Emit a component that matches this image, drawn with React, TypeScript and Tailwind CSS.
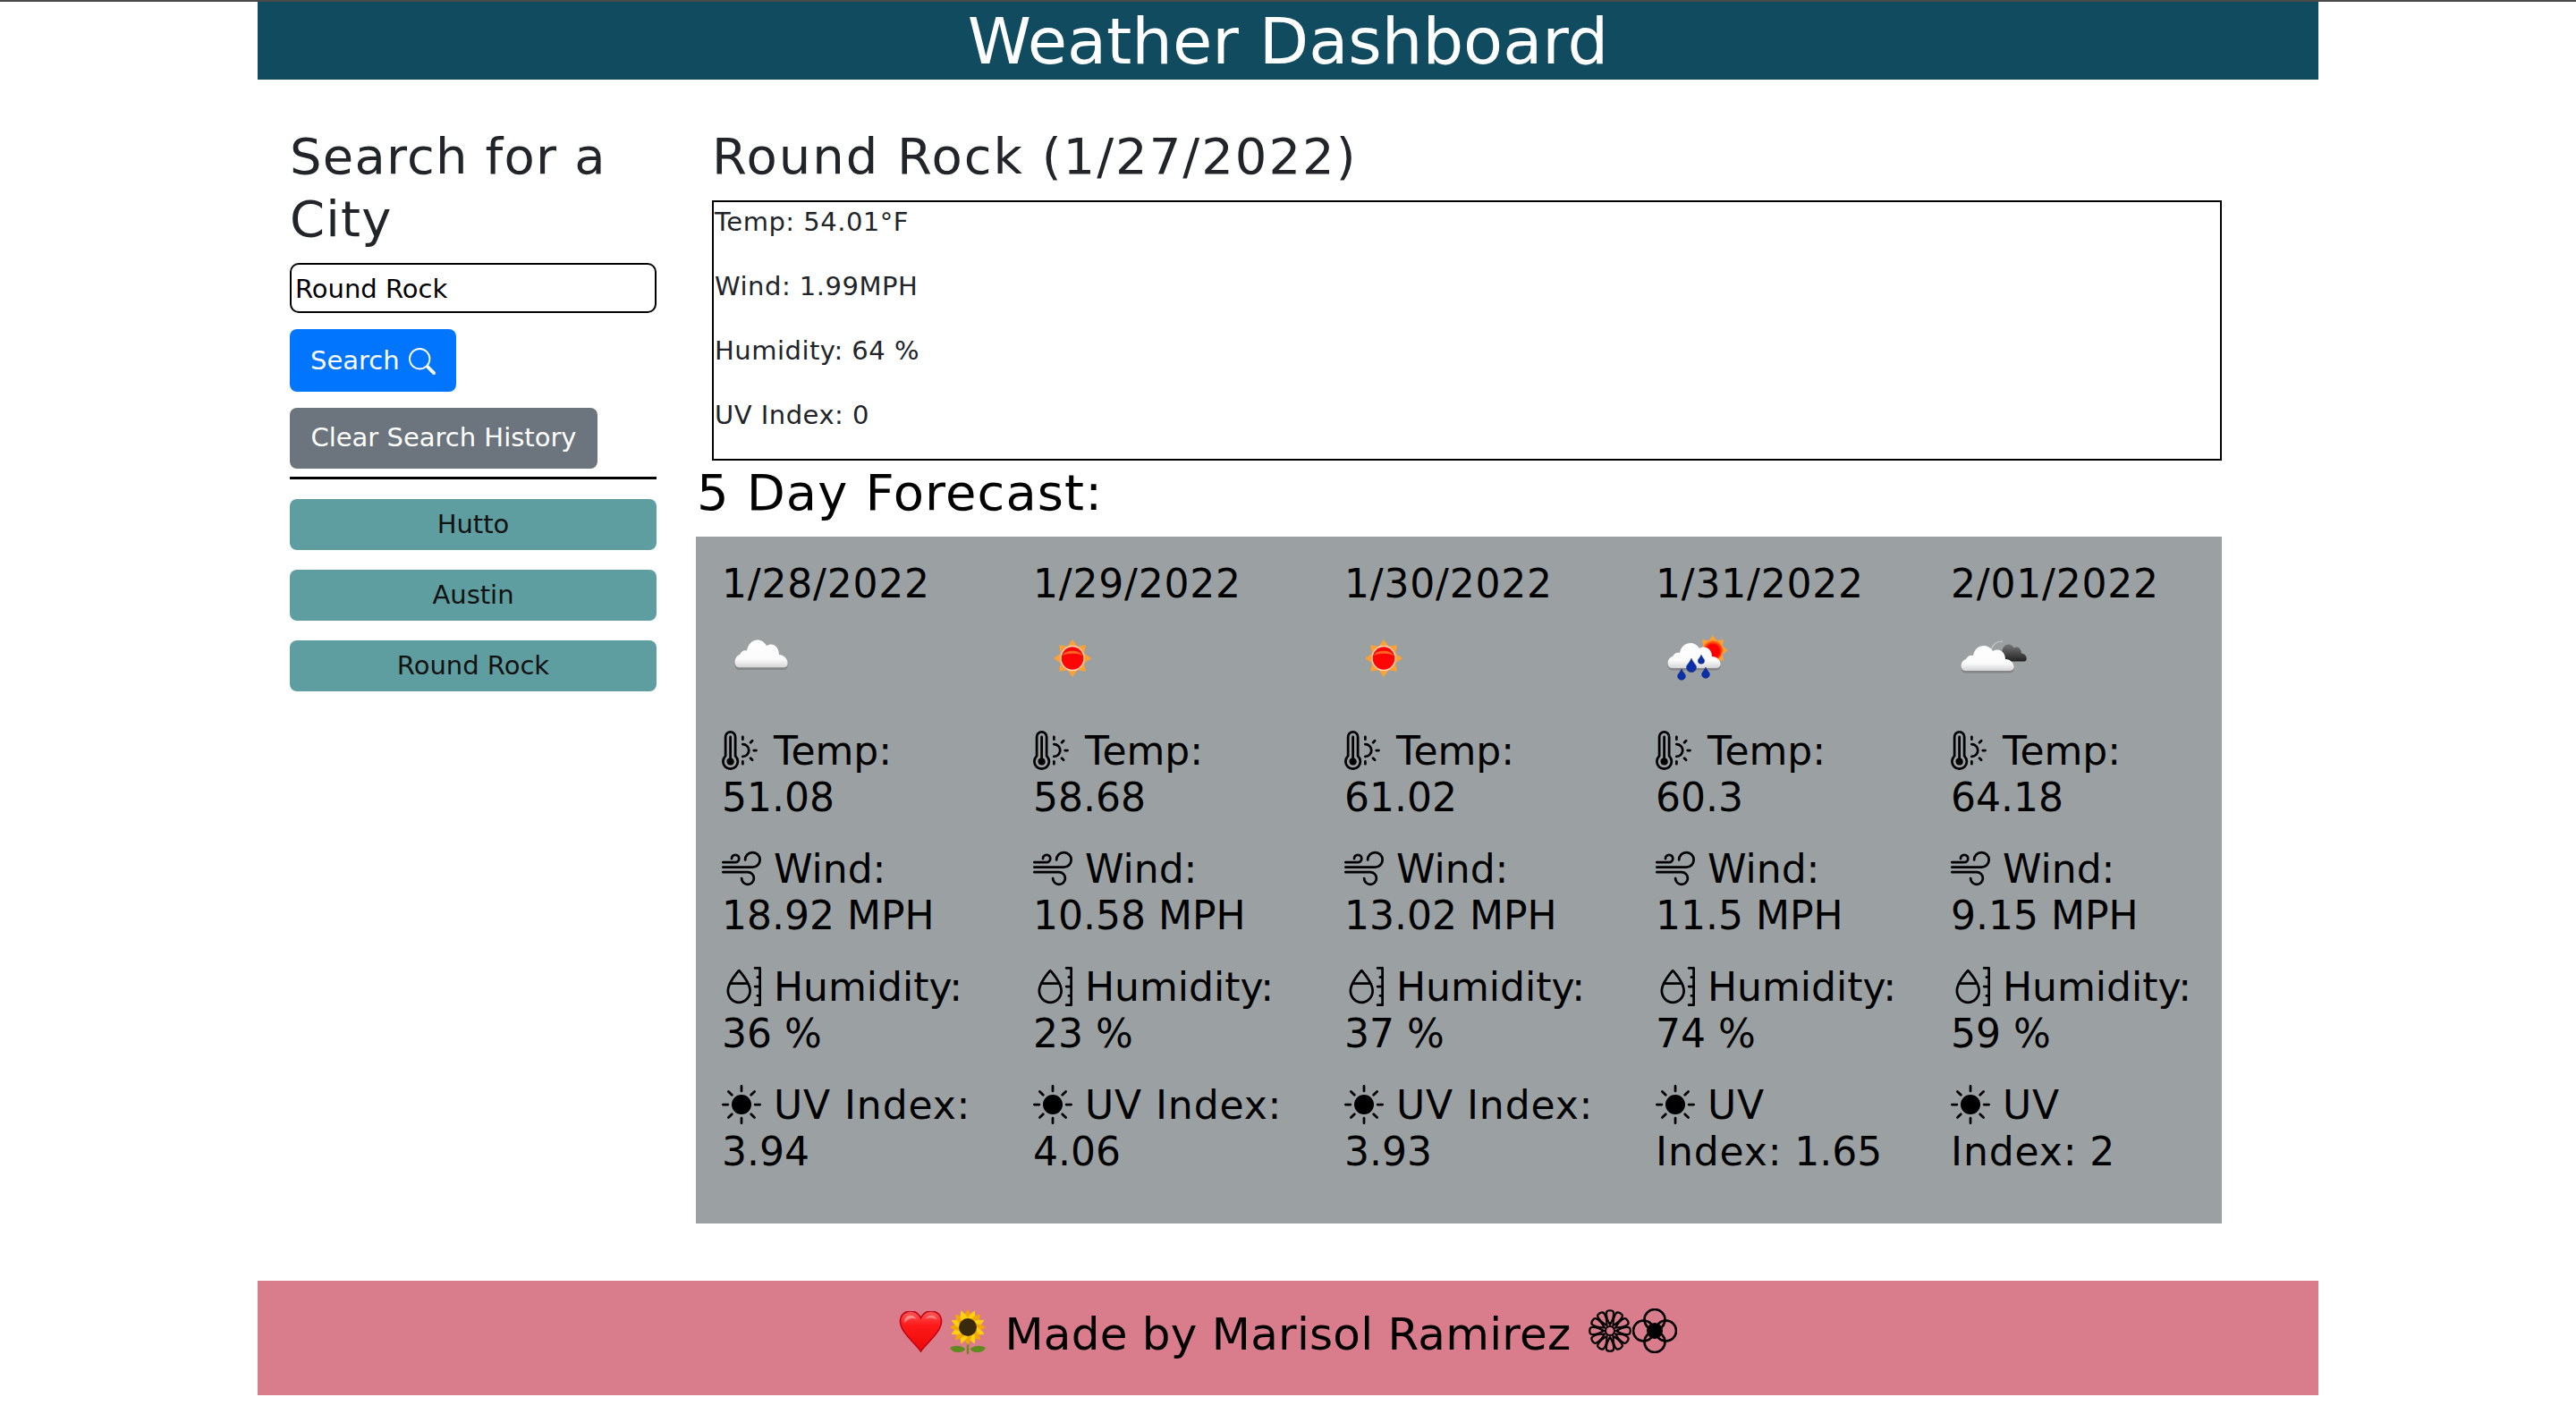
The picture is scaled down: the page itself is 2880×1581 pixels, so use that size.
import { BsThermometerSun, BsWind, BsMoisture, BsSunFill, BsSearch } from "react-icons/bs";

const days = [
  { date: "1/28/2022", icon: "cloud", temp: "51.08", wind: "18.92 MPH", hum: "36 %", uv: "3.94", w: "w-[348px]" },
  { date: "1/29/2022", icon: "sun", temp: "58.68", wind: "10.58 MPH", hum: "23 %", uv: "4.06", w: "w-[348px]" },
  { date: "1/30/2022", icon: "sun", temp: "61.02", wind: "13.02 MPH", hum: "37 %", uv: "3.93", w: "w-[348px]" },
  { date: "1/31/2022", icon: "rain", temp: "60.3", wind: "11.5 MPH", hum: "74 %", uv: "1.65", w: "w-[330px]" },
  { date: "2/01/2022", icon: "scattered", temp: "64.18", wind: "9.15 MPH", hum: "59 %", uv: "2", w: "w-[332px]" },
];

const CLOUD = "M5 33 C-1 33 -1 22 6 20 C8 16 11 15 14 16 C16 4 30 1 36 11 C42 7 50 11 50 20 C60 20 63 33 55 33 Z";

function Defs() {
  return (
    <defs>
      <linearGradient id="cl" x1="0" y1="0" x2="0" y2="1">
        <stop offset="0" stopColor="#ffffff" />
        <stop offset="0.7" stopColor="#fbfbfb" />
        <stop offset="1" stopColor="#d4d4d4" />
      </linearGradient>
      <linearGradient id="dk" x1="0" y1="0" x2="0" y2="1">
        <stop offset="0" stopColor="#777" />
        <stop offset="1" stopColor="#222" />
      </linearGradient>
      <radialGradient id="sn" cx="0.5" cy="0.55" r="0.55">
        <stop offset="0.6" stopColor="#ff0000" />
        <stop offset="1" stopColor="#ff8a1e" />
      </radialGradient>
    </defs>
  );
}

function Rays({ cx, cy, r }: { cx: number; cy: number; r: number }) {
  const pts: string[] = [];
  for (let i = 0; i < 16; i++) {
    const a = (i * Math.PI) / 8 - Math.PI / 2;
    const d = i % 2 === 0 ? r : r * 0.68;
    pts.push(`${cx + d * Math.cos(a)},${cy + d * Math.sin(a)}`);
  }
  return <polygon points={pts.join(" ")} fill="#ffa033" />;
}

function Drop({ x, y, s }: { x: number; y: number; s: number }) {
  return (
    <path
      d={`M${x} ${y - s * 1.6} C${x + s * 0.5} ${y - s * 0.5} ${x + s} ${y - s * 0.3} ${x + s} ${y + s * 0.2} A${s} ${s} 0 0 1 ${x - s} ${y + s * 0.2} C${x - s} ${y - s * 0.3} ${x - s * 0.5} ${y - s * 0.5} ${x} ${y - s * 1.6} Z`}
      fill="#0a2fa8"
      stroke="#0a2070"
      strokeWidth="0.5"
    />
  );
}

function WeatherIcon({ kind }: { kind: string }) {
  return (
    <svg viewBox="0 0 88 88" className="w-[88px] h-[88px] block blur-[0.5px]">
      <Defs />
      {kind === "cloud" && (
        <g transform="translate(14 18) scale(1 1.1)">
          <path d={CLOUD} fill="#777" opacity="0.6" transform="translate(0 2.5)" />
          <path d={CLOUD} fill="url(#cl)" />
        </g>
      )}
      {kind === "sun" && (
        <g>
          <Rays cx={44} cy={44} r={21} />
          <ellipse cx="44" cy="44" rx="13" ry="13.5" fill="#ff0505" stroke="#ffd9c4" strokeWidth="1.4" />
          <path d="M33 41 C35 34 53 34 55 41 C50 38 38 38 33 41Z" fill="#ff7a2a" opacity="0.8" />
        </g>
      )}
      {kind === "rain" && (
        <g>
          <Rays cx={64} cy={35} r={17} />
          <circle cx="64" cy="35" r="11" fill="url(#sn)" />
          <g transform="translate(13 22)">
            <path d={CLOUD} fill="#777" opacity="0.6" transform="translate(0 2.5)" />
            <path d={CLOUD} fill="url(#cl)" />
          </g>
          <Drop x={40} y={53} s={5.5} />
          <Drop x={51} y={46} s={3.6} />
          <Drop x={29} y={63} s={4.4} />
          <Drop x={56} y={61} s={4.4} />
        </g>
      )}
      {kind === "scattered" && (
        <g>
          <path d="M45 38 C45 30 50 25 58 25" fill="none" stroke="#c8c8c8" strokeWidth="1.2" />
          <g transform="translate(49 25) scale(0.6 0.68)">
            <path d={CLOUD} fill="url(#dk)" />
          </g>
          <g transform="translate(11 25)">
            <path d={CLOUD} fill="#777" opacity="0.6" transform="translate(0 2.5)" />
            <path d={CLOUD} fill="url(#cl)" />
          </g>
        </g>
      )}
    </svg>
  );
}

function Heart() {
  return (
    <svg viewBox="0 0 50 48" className="w-[49px] h-[46px] block mt-[2px]">
      <defs>
        <linearGradient id="ht" x1="0" y1="0" x2="0" y2="1">
          <stop offset="0" stopColor="#ff5a5a" />
          <stop offset="0.35" stopColor="#ff1a1a" />
          <stop offset="1" stopColor="#ec0808" />
        </linearGradient>
      </defs>
      <path
        d="M25 47 C17 36 1 24 1 12 C1 4 7 0 13 0 C19 0 23 4 25 8 C27 4 31 0 37 0 C43 0 49 4 49 12 C49 24 33 36 25 47Z"
        fill="url(#ht)"
        stroke="#c00010"
        strokeWidth="1.6"
      />
      <path d="M6 10 C8 4 16 3 20 9 C14 7 10 9 6 14Z" fill="#ffffff" opacity="0.4" />
      <path d="M30 9 C34 3 42 4 44 10 C40 8 35 7 30 9Z" fill="#ffffff" opacity="0.35" />
    </svg>
  );
}

function Sunflower() {
  const petals = Array.from({ length: 16 }, (_, i) => i * 22.5);
  return (
    <svg viewBox="0 0 42 50" className="w-[42px] h-[50px] block">
      <path d="M21 32 V50" stroke="#6a8a20" strokeWidth="2.4" />
      <path d="M18 44 C13 40 6 40 1 43 C4 49 13 50 18 45Z" fill="#5f8a1e" />
      <path d="M24 44 C29 40 36 40 41 43 C38 49 29 50 24 45Z" fill="#5f8a1e" />
      {petals.map((a) => (
        <path
          key={a}
          d="M21 20 C15 12 17 6 21 0 C25 6 27 12 21 20Z"
          fill={a % 45 === 0 ? "#f2a900" : "#ffcf14"}
          transform={`rotate(${a} 21 20)`}
        />
      ))}
      <circle cx="21" cy="20" r="10" fill="#3a2a0c" />
    </svg>
  );
}

function FlowerA() {
  const petals = Array.from({ length: 12 }, (_, i) => i * 30);
  return (
    <svg viewBox="0 0 50 50" className="w-[50px] h-[50px] block" fill="none" stroke="#000" strokeWidth="2.2">
      {petals.map((a) => (
        <path
          key={a}
          d="M25 18 C22 13 20.5 8 21 4.5 C21.5 1.5 28.5 1.5 29 4.5 C29.5 8 28 13 25 18Z"
          transform={`rotate(${a} 25 25)`}
        />
      ))}
      <circle cx="25" cy="25" r="5" />
    </svg>
  );
}

function FlowerB() {
  return (
    <svg viewBox="0 0 50 50" className="w-[50px] h-[50px] block" fill="none" stroke="#000" strokeWidth="2.6">
      <circle cx="25" cy="12.5" r="11.5" />
      <circle cx="25" cy="37.5" r="11.5" />
      <circle cx="12.5" cy="25" r="11.5" />
      <circle cx="37.5" cy="25" r="11.5" />
      <circle cx="25" cy="25" r="6" strokeWidth="6" />
    </svg>
  );
}

function Row({ icon, label, value, wide }: { icon: React.ReactNode; label: string; value: string; wide?: boolean }) {
  return (
    <p className="mb-[28px] leading-[52px]">
      {icon} <span className={wide ? "tracking-[0.9px]" : ""}>{label}</span> {value}
    </p>
  );
}

function DayCard({ d }: { d: (typeof days)[number] }) {
  const ic = "inline-block w-[44px] h-[44px] align-[-6px]";
  return (
    <div className={`${d.w} shrink-0 pl-[29px] pr-[30px] text-[44px] text-black`}>
      <h5 className="h-[53px] leading-[53px] mt-[26px] tracking-[0.8px]">{d.date}</h5>
      <div className="h-[88px] mt-[13px] mb-[34px]">
        <WeatherIcon kind={d.icon} />
      </div>
      <Row icon={<BsThermometerSun className={ic} />} label="Temp:" value={d.temp} />
      <Row icon={<BsWind className={ic} />} label="Wind:" value={d.wind} />
      <Row icon={<BsMoisture className={ic} />} label="Humidity:" value={d.hum} />
      <Row icon={<BsSunFill className={ic} />} label="UV Index:" value={d.uv} wide />
    </div>
  );
}

export default function App() {
  return (
    <div className="min-h-[1581px] bg-white text-[#212529]" style={{ fontFamily: '"DejaVu Sans", Verdana, sans-serif' }}>
      <div className="h-[2px] bg-[#4a4a4a]" />
      <div className="mx-auto w-[2304px]">
        <header className="h-[87px] bg-[#114b5f] flex items-center justify-center text-white text-[72px] leading-none">
          Weather Dashboard
        </header>

        <main className="flex mt-[51px]">
          <aside className="ml-[36px] w-[410px] shrink-0">
            <h3 className="text-[56px] leading-[70px] mb-[14px] tracking-[1.2px]">Search for a City</h3>
            <input
              readOnly
              value="Round Rock"
              className="block w-full h-[56px] border-2 border-black rounded-[10px] px-[4px] pt-[2px] text-[29px] text-black bg-white outline-none"
            />
            <button className="mt-[18px] flex items-center h-[70px] w-[186px] rounded-[8px] bg-[#0275ff] text-white text-[29px] pl-[23px] pt-[1px]">
              Search
              <BsSearch className="ml-[10px] w-[30px] h-[30px]" />
            </button>
            <button className="mt-[18px] block h-[68px] w-[344px] rounded-[8px] bg-[#6c757d] text-white text-[29px] text-center">
              Clear Search History
            </button>
            <hr className="mt-[9px] mb-[22px] border-0 h-[3px] bg-black" />
            <div className="flex flex-col gap-[22px]">
              {["Hutto", "Austin", "Round Rock"].map((c) => (
                <button key={c} className="h-[57px] rounded-[8px] bg-[#5f9ea0] text-[#111] text-[29px] text-center">
                  {c}
                </button>
              ))}
            </div>
          </aside>

          <section className="ml-[44px] w-[1706px] shrink-0">
            <h2 className="ml-[18px] text-[56px] leading-[70px] tracking-[2px]">Round Rock (1/27/2022)</h2>
            <div className="ml-[18px] mt-[14px] h-[291px] border-2 border-black pl-[1px] text-[29px] tracking-[0.5px]">
              <p className="leading-[24px] mt-[10px] mb-[48px]">Temp: 54.01°F</p>
              <p className="leading-[24px] mb-[48px]">Wind: 1.99MPH</p>
              <p className="leading-[24px] mb-[48px]">Humidity: 64 %</p>
              <p className="leading-[24px]">UV Index: 0</p>
            </div>
            <h3 className="ml-[1px] text-[56px] leading-[70px] mt-[1px] text-black tracking-[1.1px]">5 Day Forecast:</h3>
            <div className="mt-[14px] h-[768px] bg-[#9ba0a3] flex">
              {days.map((d) => (
                <DayCard key={d.date} d={d} />
              ))}
            </div>
          </section>
        </main>

        <footer className="mt-[64px] h-[128px] bg-[#d97c8c] flex items-start justify-center pt-[32px] text-black text-[50px] leading-[56px]">
          <span className="flex items-start gap-[7px] mr-[20px]">
            <Heart />
            <Sunflower />
          </span>
          <span className="tracking-[0.25px]">Made by Marisol Ramirez</span>
          <span className="ml-[18px] flex -mt-[1px]">
            <FlowerA />
            <FlowerB />
          </span>
        </footer>
      </div>
    </div>
  );
}
